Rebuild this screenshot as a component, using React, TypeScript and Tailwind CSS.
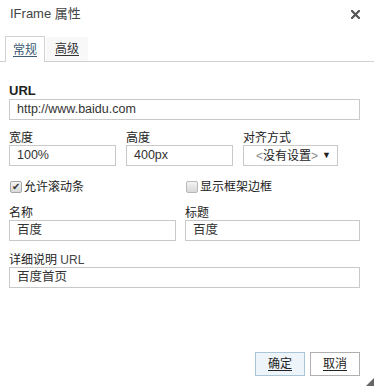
import React from "react";

const font = { fontFamily: '"Liberation Sans", Arial, "Noto Sans CJK SC", sans-serif' };

function Label({ children, bold = false }: { children: React.ReactNode; bold?: boolean }) {
  return (
    <div className={`h-[14px] leading-[14px] text-[12px] text-[#222] ${bold ? "font-bold text-[13px]" : ""}`}>{children}</div>
  );
}

function Input({ value, className = "" }: { value: string; className?: string }) {
  return (
    <div className={`h-[21px] border border-[#c9c9c9] bg-white flex items-center pl-[7px] text-[12.5px] text-[#333] ${className}`}>
      {value}
    </div>
  );
}

export default function App() {
  return (
    <div className="w-[374px] h-[386px] bg-white flex flex-col relative overflow-hidden" style={font}>
      <div className="h-[28px] pl-[10px] pr-[14px] flex items-center justify-between">
        <span className="text-[13px] text-[#444]">IFrame 属性</span>
        <svg width="9" height="9" viewBox="0 0 9 9">
          <path d="M1 1 L8 8 M8 1 L1 8" stroke="#555" strokeWidth="2.2" strokeLinecap="square" />
        </svg>
      </div>
      <div className="mt-[8px] h-[26px] flex items-end border-b border-[#d1d1d1] pl-[5px]">
        <div className="w-[40px] h-[26px] -mb-px border border-b-0 border-[#d1d1d1] bg-white flex items-center justify-center text-[12px] text-[#3c5a73] underline underline-offset-2">
          常规
        </div>
        <div className="ml-[1px] w-[42px] h-[24px] bg-[#f8f8f8] flex items-center justify-center text-[12px] text-[#333] underline underline-offset-2">
          高级
        </div>
      </div>
      <div className="px-[9px] pt-[22px]">
        <Label bold>URL</Label>
        <Input value="http://www.baidu.com" className="mt-[1px] w-[351px]" />
        <div className="mt-[11px] flex">
          <div className="w-[107px]">
            <Label>宽度</Label>
            <Input value="100%" />
          </div>
          <div className="ml-[10px] w-[107px]">
            <Label>高度</Label>
            <Input value="400px" />
          </div>
          <div className="ml-[10px] w-[95px]">
            <Label>对齐方式</Label>
            <div className="h-[21px] border border-[#c9c9c9] bg-white flex items-center justify-between pl-[12px] pr-[6px] text-[12px] text-[#222]">
              <span><span className="text-[#888]">&lt;</span>没有设置<span className="text-[#888]">&gt;</span></span>
              <span className="text-[9px]">▼</span>
            </div>
          </div>
        </div>
        <div className="mt-[13px] h-[16px] flex items-center">
          <div className="flex items-center w-[176px]">
            <div className="w-[12px] h-[12px] ml-[1px] rounded-[2px] border border-[#a8a8a8] bg-gradient-to-b from-[#f4f4f4] to-[#d8d8d8] flex items-center justify-center text-[10px] leading-none text-[#333]">✔</div>
            <span className="ml-[2px] text-[12px] text-[#222]">允许滚动条</span>
          </div>
          <div className="flex items-center">
            <div className="w-[12px] h-[12px] ml-[1px] rounded-[2px] border border-[#b8b8b8] bg-gradient-to-b from-[#f4f4f4] to-[#d8d8d8]"></div>
            <span className="ml-[2px] text-[12px] text-[#222]">显示框架边框</span>
          </div>
        </div>
        <div className="mt-[11px] flex">
          <div className="w-[167px]">
            <Label>名称</Label>
            <Input value="百度" />
          </div>
          <div className="ml-[9px] w-[175px]">
            <Label>标题</Label>
            <Input value="百度" />
          </div>
        </div>
        <div className="mt-[12px]">
          <Label>详细说明 <span className="text-[#444]">URL</span></Label>
          <Input value="百度首页" className="w-[351px]" />
        </div>
      </div>
      <div className="flex-1" />
      <div className="flex justify-end gap-[5px] pr-[14px] pb-[10px]">
        <div className="w-[50px] h-[24px] border border-[#a9c5d6] bg-[#eef5fa] flex items-center justify-center text-[12px] text-[#222] underline underline-offset-2">确定</div>
        <div className="w-[50px] h-[24px] border border-[#b0b0b0] bg-white flex items-center justify-center text-[12px] text-[#222] underline underline-offset-2">取消</div>
      </div>
      <svg className="absolute right-0 bottom-0" width="8" height="8" viewBox="0 0 8 8">
        <polygon points="8,0 8,8 0,8" fill="#666" />
      </svg>
    </div>
  );
}
